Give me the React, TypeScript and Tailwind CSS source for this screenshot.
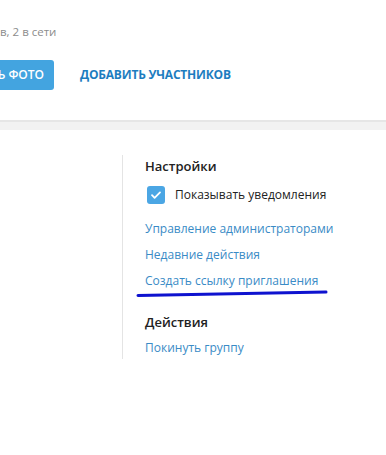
export default function App() {
  return (
    <div className="relative h-[455px] w-[386px] overflow-hidden bg-white font-['Open_Sans',sans-serif]">
      <div className="h-[120px] bg-white">
        <p className="pt-[22px] text-[11.5px] leading-[20px] text-[#8c8c8c]">в, 2 в сети</p>
        <div className="mt-[18px] flex items-center">
          <button className="flex h-[30px] w-[54px] items-center justify-end overflow-hidden rounded-r-[3px] bg-[#43a4e0] pr-[10px] text-[12px] font-semibold whitespace-nowrap text-white">
            Ь ФОТО
          </button>
          <span className="ml-[26px] text-[12px] font-bold tracking-[-0.2px] text-[#1d7dbf]">
            ДОБАВИТЬ УЧАСТНИКОВ
          </span>
        </div>
      </div>
      <div className="h-[10px] border-t-2 border-[#e6e6e6] bg-[#f2f2f2]" />
      <div className="flex pt-[25px]">
        <div className="h-[204px] w-[123px] border-r border-[#e4e4e4]" />
        <div className="pl-[22px]">
          <h2 className="text-[13px] leading-[22px] font-semibold text-[#222]">Настройки</h2>
          <label className="mt-[8px] ml-[2px] flex items-center gap-[10px]">
            <span className="flex h-[18px] w-[18px] items-center justify-center rounded-[3px] bg-[#4ba6e4]">
              <svg width="12" height="12" viewBox="0 0 12 12" fill="none">
                <path d="M2 6.2l2.6 2.6L10 3.4" stroke="white" strokeWidth="1.8" strokeLinecap="round" strokeLinejoin="round" />
              </svg>
            </span>
            <span className="text-[12px] leading-[20px] text-[#222]">Показывать уведомления</span>
          </label>
          <ul className="mt-[11px] text-[12px] leading-[26px] text-[#3a8bc6]">
            <li>Управление администраторами</li>
            <li>Недавние действия</li>
            <li>Создать ссылку приглашения</li>
          </ul>
          <h2 className="mt-[17px] text-[13px] leading-[22px] font-semibold text-[#222]">Действия</h2>
          <p className="mt-[2px] text-[12px] leading-[26px] text-[#3a8bc6]">Покинуть группу</p>
        </div>
      </div>
      <svg className="absolute top-[289px] left-[136px]" width="192" height="9" viewBox="0 0 192 9" fill="none">
        <path d="M2 6.5 C60 5.5 120 4.5 190 3" stroke="#0e12cf" strokeWidth="3" strokeLinecap="round" />
      </svg>
    </div>
  );
}
